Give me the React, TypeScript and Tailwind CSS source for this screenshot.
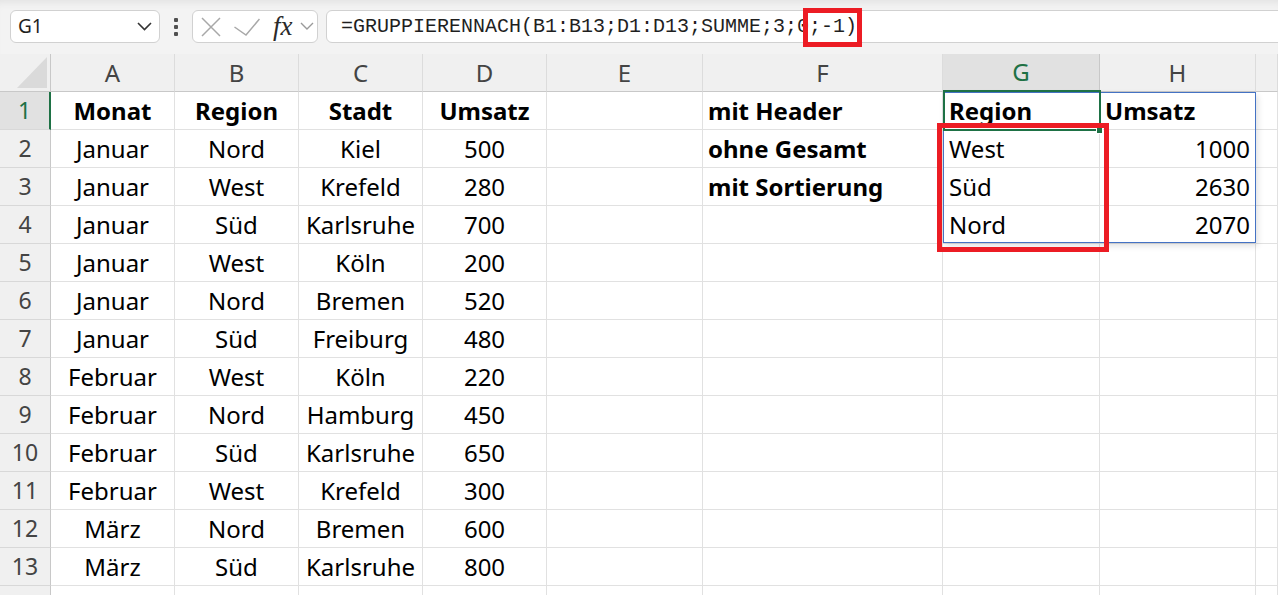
import React from 'react';

const letters = ['A', 'B', 'C', 'D', 'E', 'F', 'G', 'H', ''];

const table: string[][] = [
  ['Monat', 'Region', 'Stadt', 'Umsatz'],
  ['Januar', 'Nord', 'Kiel', '500'],
  ['Januar', 'West', 'Krefeld', '280'],
  ['Januar', 'Süd', 'Karlsruhe', '700'],
  ['Januar', 'West', 'Köln', '200'],
  ['Januar', 'Nord', 'Bremen', '520'],
  ['Januar', 'Süd', 'Freiburg', '480'],
  ['Februar', 'West', 'Köln', '220'],
  ['Februar', 'Nord', 'Hamburg', '450'],
  ['Februar', 'Süd', 'Karlsruhe', '650'],
  ['Februar', 'West', 'Krefeld', '300'],
  ['März', 'Nord', 'Bremen', '600'],
  ['März', 'Süd', 'Karlsruhe', '800'],
  ['', '', '', ''],
];

const notes = ['mit Header', 'ohne Gesamt', 'mit Sortierung'];
const regions = ['Region', 'West', 'Süd', 'Nord'];
const sums = ['Umsatz', '1000', '2630', '2070'];

const cellBase =
  'flex items-center h-[38px] border-r border-b border-[#e1e1e1] px-[5px] overflow-hidden whitespace-nowrap text-[24px] text-black';

const Toolbar: React.FC = () => (
  <div className="relative h-[54px] bg-[#f3f3f3] shadow-[inset_0_8px_8px_-6px_rgba(0,0,0,0.08)] flex items-start pt-[10px] pl-[10px]">
    {/* name box */}
    <div className="w-[150px] h-[33px] bg-white border border-[#d1d1d1] rounded-[6px] flex items-center justify-between pl-[7px] pr-[7px]">
      <span className="text-[19px] text-[#1f1f1f]">G1</span>
      <svg width="15" height="9" viewBox="0 0 15 9">
        <polyline points="1,1 7.5,7.5 14,1" fill="none" stroke="#333" strokeWidth="1.6" />
      </svg>
    </div>
    {/* dots */}
    <div className="w-[32px] h-[33px] flex flex-col items-center justify-center gap-[3px]">
      <span className="w-[4px] h-[4px] bg-[#505050] rounded-[1px]" />
      <span className="w-[4px] h-[4px] bg-[#505050] rounded-[1px]" />
      <span className="w-[4px] h-[4px] bg-[#505050] rounded-[1px]" />
    </div>
    {/* cancel / enter / fx */}
    <div className="w-[126px] h-[33px] bg-white border border-[#d1d1d1] rounded-[6px] flex items-center pl-[8px]">
      <svg width="20" height="20" viewBox="0 0 20 20">
        <path d="M1 1 L19 19 M19 1 L1 19" stroke="#a8a8a8" strokeWidth="1.5" />
      </svg>
      <svg width="26" height="18" viewBox="0 0 26 18" className="ml-[13px]">
        <polyline points="0.5,9 12,17 25.5,1" fill="none" stroke="#a8a8a8" strokeWidth="1.5" />
      </svg>
      <span className="ml-[13px] text-[27px] leading-none italic text-[#2a2a2a] font-['Liberation_Serif',serif]">fx</span>
      <svg width="14" height="9" viewBox="0 0 14 9" className="ml-[7px]">
        <polyline points="1,1 7,7 13,1" fill="none" stroke="#9a9a9a" strokeWidth="1.4" />
      </svg>
    </div>
    {/* formula */}
    <div className="flex-1 ml-[8px] mr-[-12px] h-[33px] bg-white border border-[#d1d1d1] rounded-l-[6px] flex items-center pl-[14px]">
      <span className="font-['Liberation_Mono',monospace] text-[20px] text-[#1f1f1f]">
        =GRUPPIERENNACH(B1:B13;D1:D13;SUMME;3;0;-1)
      </span>
    </div>
    <div className="absolute left-[803px] top-[8px] w-[59px] h-[39px] border-[5px] border-[#ec1c24]" />
  </div>
);

const App: React.FC = () => {
  return (
    <div className="w-full h-screen overflow-hidden bg-white font-['Noto_Sans',sans-serif]">
      <Toolbar />
      <div className="relative grid grid-cols-[51px_124px_124px_124px_124px_156px_240px_157px_156px_1fr]">
        {/* header row */}
        <div className="h-[38px] bg-[#f0f0f0] border-r border-b border-[#c8c8c8] flex items-end justify-end pr-[3px] pb-[3px]">
          <svg width="30" height="31" viewBox="0 0 30 31">
            <polygon points="0,31 30,0 30,31" fill="#dadada" />
          </svg>
        </div>
        {letters.map((l, i) => (
          <div
            key={'h' + i}
            className={
              'h-[38px] flex items-center justify-center text-[24px] ' +
              (l === 'G'
                ? 'bg-[#e1e1e1] text-[#1e7145] border-r border-r-[#c8c8c8] border-b-2 border-b-[#1e7145]'
                : 'bg-[#f0f0f0] text-[#444] border-r border-r-[#dcdcdc] border-b border-b-[#c8c8c8]')
            }
          >
            {l}
          </div>
        ))}

        {table.map((row, r) => (
          <React.Fragment key={'r' + r}>
            <div
              className={
                'h-[38px] flex items-center justify-center text-[23px] border-b border-[#d8d8d8] ' +
                (r === 0
                  ? 'bg-[#e1e1e1] text-[#1e7145] border-r-2 border-r-[#1e7145]'
                  : 'bg-[#f0f0f0] text-[#444] border-r border-r-[#c8c8c8]')
              }
            >
              {r < 13 ? r + 1 : ''}
            </div>
            {row.map((v, c) => (
              <div key={'c' + c} className={cellBase + ' justify-center' + (r === 0 ? ' font-bold' : '')}>
                {v}
              </div>
            ))}
            <div className={cellBase} />
            <div className={cellBase + ' font-bold'}>{notes[r] ?? ''}</div>
            <div className={cellBase + ' pl-[6px]' + (r === 0 ? ' font-bold' : '')}>{regions[r] ?? ''}</div>
            <div className={cellBase + (r === 0 ? ' font-bold justify-start' : ' justify-end')}>{sums[r] ?? ''}</div>
            <div className={cellBase} />
          </React.Fragment>
        ))}

        {/* spill range */}
        <div className="absolute left-[943px] top-[38px] w-[313px] h-[151px] border border-[#4472c4] shadow-[2px_3px_6px_rgba(0,0,0,0.12)]" />
        {/* active cell */}
        <div className="absolute left-[943px] top-[36px] w-[158px] h-[41px] border-2 border-[#1e7145]" />
        <div className="absolute left-[1096px] top-[73px] w-[7px] h-[7px] bg-[#1e7145] border border-white" />
        {/* highlight */}
        <div className="absolute left-[937px] top-[69px] w-[172px] h-[129px] border-[5px] border-[#ec1c24]" />
      </div>
    </div>
  );
};

export default App;
